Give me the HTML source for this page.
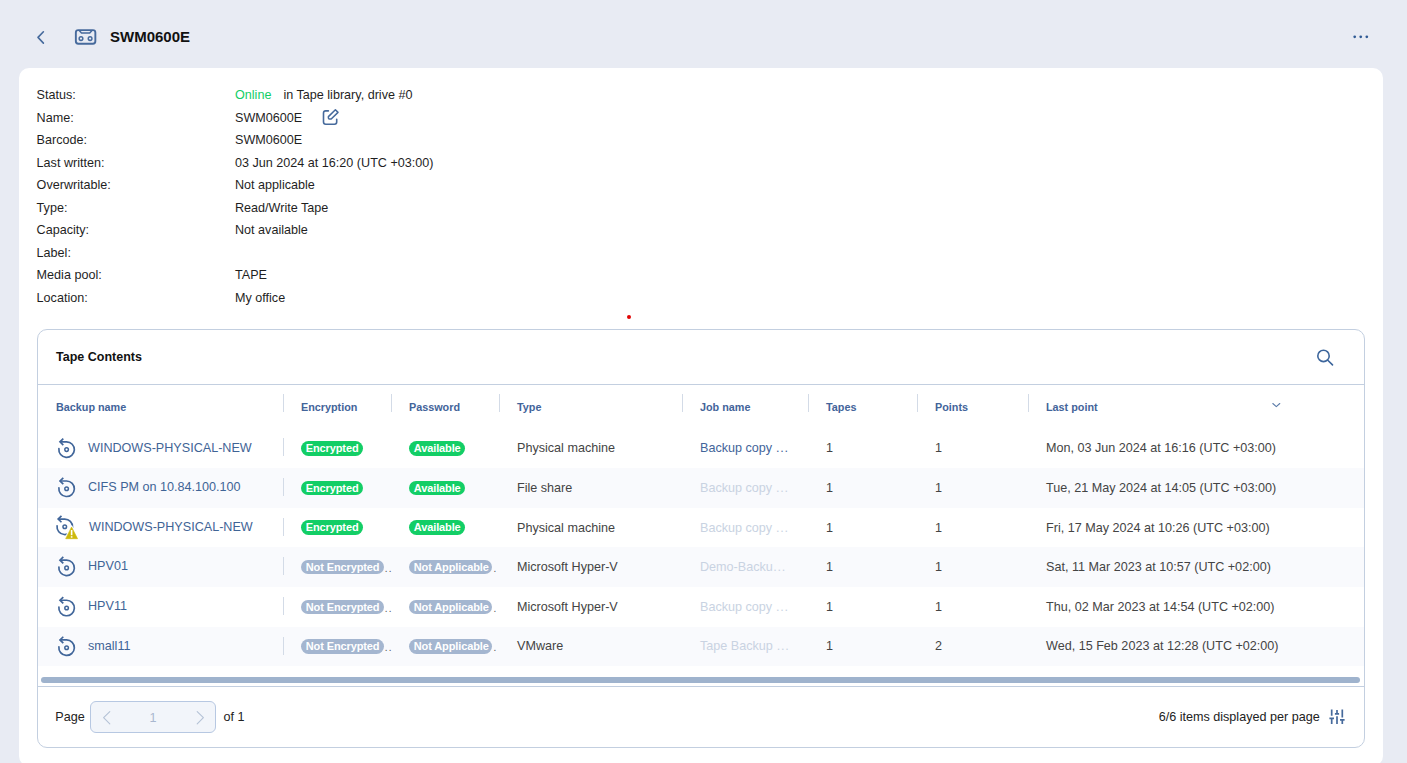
<!DOCTYPE html>
<html lang="en">
<head>
<meta charset="utf-8">
<title>SWM0600E</title>
<style>
*{box-sizing:border-box;margin:0;padding:0}
html,body{width:1407px;height:763px;overflow:hidden}
body{background:#e8ebf3;font-family:"Liberation Sans",Arial,sans-serif;font-size:12.6px;color:#1f1f1f;position:relative}
.abs{position:absolute}
.title{left:110px;top:28px;font-size:15px;font-weight:bold;line-height:18px;color:#111}
.card{left:19px;top:68px;width:1364px;height:698px;background:#fff;border-radius:10px}
.lbl,.val{position:absolute;line-height:14px;white-space:nowrap;font-size:12.6px}
.lbl{left:36.6px}
.val{left:235px}
.green{color:#13ce66}
.panel{left:37px;top:329px;width:1328px;height:419px;border:1px solid #c3cfe0;border-radius:10px;background:#fff;overflow:hidden}
.ptitle{left:18px;top:19px;font-weight:bold;font-size:12.5px;line-height:16px;color:#111}
.hline{left:0;width:1326px;height:1px;background:#c3cfe0}
.th{position:absolute;top:71px;font-size:10.8px;font-weight:bold;color:#43649a;line-height:13px;white-space:nowrap}
.sep{position:absolute;width:1px;background:#d3dbe7}
.row{position:absolute;left:0;width:1326px}
.row.alt{background:#f9fafd}
.cell{position:absolute;top:0;height:39.67px;line-height:39.67px;font-size:12.6px;color:#444;white-space:pre}
.name{color:#3f6496;left:50px}
.job{color:#43649a;left:662px}
.job.dim{color:#c9d3e2}
.badge{position:absolute;border-radius:8px;color:#fff;font-size:11px;font-weight:bold;padding:0 4.8px;white-space:nowrap;letter-spacing:-0.12px}
.bg{background:#13ce66}
.bgray{background:#a4b6d0}
.ric{position:absolute}
.dots{position:absolute;top:0;height:39.67px;line-height:41.7px;color:#555;font-size:10px;letter-spacing:1.2px}
.el{letter-spacing:0.7px;margin-left:0.5px}
</style>
</head>
<body>

<!-- header -->
<svg class="abs" style="left:30px;top:25px" width="20" height="25" viewBox="30 25 20 25"><path d="M43.4 31.8 L38 37.4 L43.4 43.1" fill="none" stroke="#466a9c" stroke-width="1.6" stroke-linecap="round" stroke-linejoin="round"/></svg>
<svg class="abs" style="left:70px;top:25px" width="30" height="25" viewBox="70 25 30 25"><rect x="75.85" y="30.1" width="19.5" height="13.6" rx="2.4" fill="none" stroke="#466a9c" stroke-width="1.9"/><path d="M79.2 30.4 L81.5 33.1 H89.7 L92 30.4" fill="none" stroke="#466a9c" stroke-width="1.5" stroke-linejoin="round"/><circle cx="81" cy="38.55" r="1.85" fill="none" stroke="#466a9c" stroke-width="1.45"/><circle cx="90.1" cy="38.55" r="1.85" fill="none" stroke="#466a9c" stroke-width="1.45"/></svg>
<div class="abs title">SWM0600E</div>
<svg class="abs" style="left:1350px;top:30px" width="22" height="14" viewBox="1350 30 22 14"><circle cx="1354.7" cy="36.8" r="1.35" fill="#2f5a94"/><circle cx="1360.75" cy="36.8" r="1.35" fill="#2f5a94"/><circle cx="1366.8" cy="36.8" r="1.35" fill="#2f5a94"/></svg>

<div class="abs card"></div>

<!-- info -->
<div class="lbl" style="top:88px">Status:</div><div class="val" style="top:88px"><span class="green">Online</span><span style="margin-left:12px">in Tape library, drive #0</span></div>
<div class="lbl" style="top:111px">Name:</div><div class="val" style="top:111px">SWM0600E</div>
<svg class="abs" style="left:318px;top:104px" width="26" height="26" viewBox="318 104 26 26"><path d="M328.4 110.9 H325.7 Q323.5 110.9 323.5 113.1 V122 Q323.5 124.2 325.7 124.2 H334.5 Q336.7 124.2 336.7 122 V119.2" fill="none" stroke="#466a9c" stroke-width="1.6" stroke-linecap="round"/><path d="M335.4 109.8 L338 112.4 L331.2 119 H329.4 Q328.4 119 328.4 118 V116.6 Z" fill="none" stroke="#466a9c" stroke-width="1.5" stroke-linejoin="round"/></svg>
<div class="lbl" style="top:133px">Barcode:</div><div class="val" style="top:133px">SWM0600E</div>
<div class="lbl" style="top:156px">Last written:</div><div class="val" style="top:156px">03 Jun 2024 at 16:20 (UTC +03:00)</div>
<div class="lbl" style="top:178px">Overwritable:</div><div class="val" style="top:178px">Not applicable</div>
<div class="lbl" style="top:201px">Type:</div><div class="val" style="top:201px">Read/Write Tape</div>
<div class="lbl" style="top:223px">Capacity:</div><div class="val" style="top:223px">Not available</div>
<div class="lbl" style="top:246px">Label:</div>
<div class="lbl" style="top:268px">Media pool:</div><div class="val" style="top:268px">TAPE</div>
<div class="lbl" style="top:291px">Location:</div><div class="val" style="top:291px">My office</div>

<div class="abs" style="left:627px;top:315.2px;width:4px;height:4px;border-radius:50%;background:#e10505"></div>

<!-- panel -->
<div class="abs panel">
  <div class="abs ptitle">Tape Contents</div>
  <svg class="abs" style="left:1274px;top:14px" width="26" height="26" viewBox="1312 344 26 26"><circle cx="1323.5" cy="355.9" r="5.7" fill="none" stroke="#3d669c" stroke-width="1.6"/><path d="M1327.8 360.2 L1332.5 364.9" stroke="#3d669c" stroke-width="1.6" stroke-linecap="round"/></svg>
  <div class="abs hline" style="top:54px"></div>

  <!-- header cells -->
  <div class="th" style="left:18px">Backup name</div>
  <div class="th" style="left:263px">Encryption</div>
  <div class="th" style="left:371px">Password</div>
  <div class="th" style="left:479px">Type</div>
  <div class="th" style="left:662px">Job name</div>
  <div class="th" style="left:788px">Tapes</div>
  <div class="th" style="left:897px">Points</div>
  <div class="th" style="left:1008px">Last point</div>
  <svg class="abs" style="left:1230px;top:68px" width="16" height="14" viewBox="1268 398 16 14"><path d="M1272.8 403.5 L1276.3 406.6 L1279.8 403.5" fill="none" stroke="#5b7caa" stroke-width="1.1" stroke-linecap="round" stroke-linejoin="round"/></svg>

  <div class="sep" style="left:245px;top:64px;height:18px"></div>
  <div class="sep" style="left:353px;top:64px;height:18px"></div>
  <div class="sep" style="left:461px;top:64px;height:18px"></div>
  <div class="sep" style="left:644px;top:64px;height:18px"></div>
  <div class="sep" style="left:770px;top:64px;height:18px"></div>
  <div class="sep" style="left:879px;top:64px;height:18px"></div>
  <div class="sep" style="left:990px;top:64px;height:18px"></div>

  <div class="row" style="top:98px;height:40px">
    <svg class="ric" style="left:16px;top:8px" width="28" height="28" viewBox="0 0 28 28"><g transform="translate(0.60 0.60)"><path d="M4.3 12.1 A7.75 7.75 0 1 0 12 5.25 H6.0" fill="none" stroke="#41669a" stroke-width="1.7" stroke-linecap="round"/><path d="M8.7 2.05 L5.4 5.25 L8.7 8.45" fill="none" stroke="#41669a" stroke-width="1.7" stroke-linejoin="miter" stroke-linecap="butt"/><circle cx="12" cy="13" r="1.8" fill="none" stroke="#41669a" stroke-width="1.5"/></g></svg>
    <div class="cell name" style="top:1px">WINDOWS-PHYSICAL-NEW</div>
    <div class="sep" style="left:245px;top:10px;height:18px"></div>
    <div class="badge bg" style="left:263px;top:12.7px;height:15.2px;line-height:15.2px">Encrypted</div>
    <div class="badge bg" style="left:371px;top:12.7px;height:15.2px;line-height:15.2px">Available</div>
    <div class="cell" style="left:479px;top:1px">Physical machine</div>
    <div class="cell job" style="top:1px">Backup copy <span class="el">...</span></div>
    <div class="cell" style="left:788px;top:1px">1</div>
    <div class="cell" style="left:897px;top:1px">1</div>
    <div class="cell" style="left:1008px;top:1px">Mon, 03 Jun 2024 at 16:16 (UTC +03:00)</div>
  </div>
  <div class="row alt" style="top:138px;height:40px">
    <svg class="ric" style="left:16px;top:7px" width="28" height="28" viewBox="0 0 28 28"><g transform="translate(0.60 0.76)"><path d="M4.3 12.1 A7.75 7.75 0 1 0 12 5.25 H6.0" fill="none" stroke="#41669a" stroke-width="1.7" stroke-linecap="round"/><path d="M8.7 2.05 L5.4 5.25 L8.7 8.45" fill="none" stroke="#41669a" stroke-width="1.7" stroke-linejoin="miter" stroke-linecap="butt"/><circle cx="12" cy="13" r="1.8" fill="none" stroke="#41669a" stroke-width="1.5"/></g></svg>
    <div class="cell name" style="top:0px">CIFS PM on 10.84.100.100</div>
    <div class="sep" style="left:245px;top:10px;height:18px"></div>
    <div class="badge bg" style="left:263px;top:12.6px;height:14.7px;line-height:14.7px">Encrypted</div>
    <div class="badge bg" style="left:371px;top:12.6px;height:14.7px;line-height:14.7px">Available</div>
    <div class="cell" style="left:479px;top:1px">File share</div>
    <div class="cell job dim" style="top:1px">Backup copy <span class="el">...</span></div>
    <div class="cell" style="left:788px;top:1px">1</div>
    <div class="cell" style="left:897px;top:1px">1</div>
    <div class="cell" style="left:1008px;top:1px">Tue, 21 May 2024 at 14:05 (UTC +03:00)</div>
  </div>
  <div class="row" style="top:178px;height:39px">
    <svg class="ric" style="left:14px;top:5px" width="28" height="28" viewBox="0 0 28 28"><g transform="translate(0.77 0.80)"><defs><mask id="wm"><rect x="-2" y="-2" width="32" height="32" fill="#fff"/><path d="M18.8 12.2 L25.7 25.6 H12 Z" fill="#000" stroke="#000" stroke-width="1.6" stroke-linejoin="round"/></mask></defs><g mask="url(#wm)"><path d="M4.3 12.1 A7.75 7.75 0 1 0 12 5.25 H6.0" fill="none" stroke="#41669a" stroke-width="1.7" stroke-linecap="round"/><path d="M8.7 2.05 L5.4 5.25 L8.7 8.45" fill="none" stroke="#41669a" stroke-width="1.7" stroke-linejoin="miter" stroke-linecap="butt"/><circle cx="12" cy="13" r="1.8" fill="none" stroke="#41669a" stroke-width="1.5"/></g><path d="M18.8 13.2 L24.8 24.9 H12.9 Z" fill="#cdb90c" stroke="#cdb90c" stroke-width="0.6" stroke-linejoin="round"/><rect x="18.05" y="16.2" width="1.6" height="5.2" fill="#fff"/><rect x="18.05" y="22.4" width="1.6" height="1.5" fill="#fff"/></g></svg>
    <div class="cell name" style="left:51px;top:0px">WINDOWS-PHYSICAL-NEW</div>
    <div class="sep" style="left:245px;top:10px;height:18px"></div>
    <div class="badge bg" style="left:263px;top:11.6px;height:15.4px;line-height:15.4px">Encrypted</div>
    <div class="badge bg" style="left:371px;top:11.6px;height:15.4px;line-height:15.4px">Available</div>
    <div class="cell" style="left:479px;top:1px">Physical machine</div>
    <div class="cell job dim" style="top:1px">Backup copy <span class="el">...</span></div>
    <div class="cell" style="left:788px;top:1px">1</div>
    <div class="cell" style="left:897px;top:1px">1</div>
    <div class="cell" style="left:1008px;top:1px">Fri, 17 May 2024 at 10:26 (UTC +03:00)</div>
  </div>
  <div class="row alt" style="top:217px;height:40px">
    <svg class="ric" style="left:16px;top:7px" width="28" height="28" viewBox="0 0 28 28"><g transform="translate(0.60 0.90)"><path d="M4.3 12.1 A7.75 7.75 0 1 0 12 5.25 H6.0" fill="none" stroke="#41669a" stroke-width="1.7" stroke-linecap="round"/><path d="M8.7 2.05 L5.4 5.25 L8.7 8.45" fill="none" stroke="#41669a" stroke-width="1.7" stroke-linejoin="miter" stroke-linecap="butt"/><circle cx="12" cy="13" r="1.8" fill="none" stroke="#41669a" stroke-width="1.5"/></g></svg>
    <div class="cell name" style="top:0px">HPV01</div>
    <div class="sep" style="left:245px;top:10px;height:18px"></div>
    <div class="badge bgray" style="left:263px;top:12.9px;height:14.2px;line-height:14.2px">Not Encrypted</div><div class="dots" style="left:346.7px;top:1px">..</div>
    <div class="badge bgray" style="left:371px;padding-right:3.3px;top:12.9px;height:14.2px;line-height:14.2px">Not Applicable</div><div class="dots" style="left:455.4px;top:1px">.</div>
    <div class="cell" style="left:479px;top:1px">Microsoft Hyper-V</div>
    <div class="cell job dim" style="top:1px">Demo-Backu<span class="el">...</span></div>
    <div class="cell" style="left:788px;top:1px">1</div>
    <div class="cell" style="left:897px;top:1px">1</div>
    <div class="cell" style="left:1008px;top:1px">Sat, 11 Mar 2023 at 10:57 (UTC +02:00)</div>
  </div>
  <div class="row" style="top:257px;height:40px">
    <svg class="ric" style="left:16px;top:8px" width="28" height="28" viewBox="0 0 28 28"><g transform="translate(0.60 0.00)"><path d="M4.3 12.1 A7.75 7.75 0 1 0 12 5.25 H6.0" fill="none" stroke="#41669a" stroke-width="1.7" stroke-linecap="round"/><path d="M8.7 2.05 L5.4 5.25 L8.7 8.45" fill="none" stroke="#41669a" stroke-width="1.7" stroke-linejoin="miter" stroke-linecap="butt"/><circle cx="12" cy="13" r="1.8" fill="none" stroke="#41669a" stroke-width="1.5"/></g></svg>
    <div class="cell name" style="top:0px">HPV11</div>
    <div class="sep" style="left:245px;top:10px;height:18px"></div>
    <div class="badge bgray" style="left:263px;top:12.7px;height:14.5px;line-height:14.5px">Not Encrypted</div><div class="dots" style="left:346.7px;top:1px">..</div>
    <div class="badge bgray" style="left:371px;padding-right:3.3px;top:12.7px;height:14.5px;line-height:14.5px">Not Applicable</div><div class="dots" style="left:455.4px;top:1px">.</div>
    <div class="cell" style="left:479px;top:1px">Microsoft Hyper-V</div>
    <div class="cell job dim" style="top:1px">Backup copy <span class="el">...</span></div>
    <div class="cell" style="left:788px;top:1px">1</div>
    <div class="cell" style="left:897px;top:1px">1</div>
    <div class="cell" style="left:1008px;top:1px">Thu, 02 Mar 2023 at 14:54 (UTC +02:00)</div>
  </div>
  <div class="row alt" style="top:297px;height:39px">
    <svg class="ric" style="left:16px;top:7px" width="28" height="28" viewBox="0 0 28 28"><g transform="translate(0.60 0.70)"><path d="M4.3 12.1 A7.75 7.75 0 1 0 12 5.25 H6.0" fill="none" stroke="#41669a" stroke-width="1.7" stroke-linecap="round"/><path d="M8.7 2.05 L5.4 5.25 L8.7 8.45" fill="none" stroke="#41669a" stroke-width="1.7" stroke-linejoin="miter" stroke-linecap="butt"/><circle cx="12" cy="13" r="1.8" fill="none" stroke="#41669a" stroke-width="1.5"/></g></svg>
    <div class="cell name" style="top:0px">small11</div>
    <div class="sep" style="left:245px;top:10px;height:18px"></div>
    <div class="badge bgray" style="left:263px;top:11.9px;height:15.1px;line-height:15.1px">Not Encrypted</div><div class="dots" style="left:346.7px;top:0px">..</div>
    <div class="badge bgray" style="left:371px;padding-right:3.3px;top:11.9px;height:15.1px;line-height:15.1px">Not Applicable</div><div class="dots" style="left:455.4px;top:0px">.</div>
    <div class="cell" style="left:479px;top:0px">VMware</div>
    <div class="cell job dim" style="top:0px">Tape Backup <span class="el">...</span></div>
    <div class="cell" style="left:788px;top:0px">1</div>
    <div class="cell" style="left:897px;top:0px">2</div>
    <div class="cell" style="left:1008px;top:0px">Wed, 15 Feb 2023 at 12:28 (UTC +02:00)</div>
  </div>

  <!-- scrollbar -->
  <div class="abs" style="left:3px;top:347px;width:1319px;height:6px;border-radius:3px;background:#9fb3cd"></div>
  <div class="abs hline" style="top:356px"></div>

  <!-- footer -->
  <div class="abs" style="left:17.3px;top:380px;line-height:14px;font-size:12.6px;color:#222">Page</div>
  <div class="abs" style="left:52px;top:371px;width:125.6px;height:31.8px;border:1px solid #b7c8e2;border-radius:6px;background:#f2f5fa"></div>
  <svg class="abs" style="left:60px;top:376px" width="16" height="24" viewBox="98 706 16 24"><path d="M109.8 711.7 L103.6 717.7 L109.8 723.8" fill="none" stroke="#b4c2d6" stroke-width="1.1" stroke-linecap="round" stroke-linejoin="round"/></svg>
  <svg class="abs" style="left:154px;top:376px" width="16" height="24" viewBox="192 706 16 24"><path d="M197.2 711.7 L203.4 717.7 L197.2 723.8" fill="none" stroke="#b4c2d6" stroke-width="1.1" stroke-linecap="round" stroke-linejoin="round"/></svg>
  <div class="abs" style="left:52px;top:380.6px;width:126px;text-align:center;line-height:14px;font-size:12.6px;color:#a9b7cf">1</div>
  <div class="abs" style="left:185.6px;top:380px;line-height:14px;font-size:12.6px;color:#222">of 1</div>
  <div class="abs" style="right:44.3px;top:380px;line-height:14px;font-size:12.6px;color:#222">6/6 items displayed per page</div>
  <svg class="abs" style="left:1288px;top:374px" width="24" height="26" viewBox="1326 704 24 26"><g stroke="#466a9c" stroke-width="1.7" fill="none"><path d="M1331.7 709.4 V715.8 M1331.7 718.4 V724.1 M1329.4 718.4 H1334"/><path d="M1337 709.9 V713.6 M1337 716.3 V724.1 M1334.9 713.85 H1339.1"/><path d="M1342.3 709.4 V717.4 M1342.3 720 V724.1 M1340 719.95 H1344.6"/></g></svg>
</div>

</body>
</html>
